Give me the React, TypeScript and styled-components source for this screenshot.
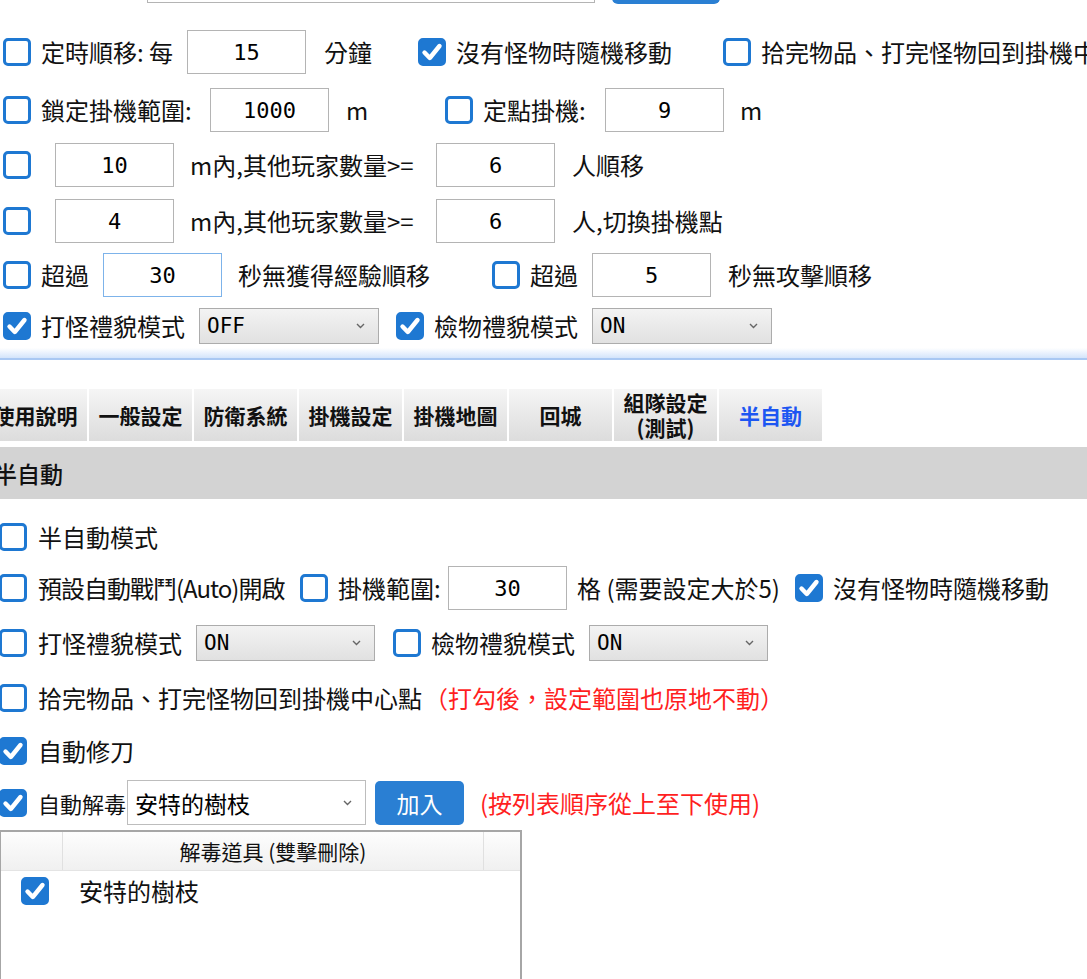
import styled, { createGlobalStyle } from 'styled-components';

const GlobalStyle = createGlobalStyle`
  html, body {
    margin: 0;
    padding: 0;
    background: #fff;
    overflow: hidden;
  }
  body {
    font-family: "Noto Sans CJK TC", "Noto Sans", sans-serif;
    color: #111;
  }
`;

const Page = styled.div`
  width: 1087px;
  height: 979px;
  overflow: hidden;
  display: flex;
  flex-direction: column;
  > * {
    flex-shrink: 0;
  }
`;

const Row = styled.div<{ $mt?: number; $h?: number }>`
  display: flex;
  align-items: center;
  height: ${(p) => p.$h ?? 44}px;
  margin-top: ${(p) => p.$mt ?? 0}px;
  white-space: nowrap;
`;

const StubInput = styled.div`
  margin-left: 147px;
  width: 448px;
  height: 43px;
  box-sizing: border-box;
  border: 1px solid #b4b4b4;
`;

const StubButton = styled.div`
  margin-left: 17px;
  width: 108px;
  height: 44px;
  border-radius: 6px;
  background: #2a7fd3;
`;

const Box = styled.span<{ $on?: boolean; $ml?: number }>`
  flex: none;
  width: 28px;
  height: 28px;
  box-sizing: border-box;
  margin-left: ${(p) => p.$ml ?? 0}px;
  border: 3px solid #1e78d2;
  border-radius: 5px;
  background: ${(p) => (p.$on ? '#1e78d2' : '#fff')};
  display: flex;
  align-items: center;
  justify-content: center;
  svg {
    display: block;
  }
`;

const Text = styled.span<{ $ml?: number; $w?: number; $red?: boolean; $size?: number; $tight?: boolean }>`
  flex: none;
  margin-left: ${(p) => p.$ml ?? 0}px;
  width: ${(p) => (p.$w ? `${p.$w}px` : 'auto')};
  font-size: ${(p) => p.$size ?? 24}px;
  letter-spacing: ${(p) => (p.$tight ? '-1px' : 'normal')};
  line-height: 30px;
  color: ${(p) => (p.$red ? '#ff1f1f' : '#111')};
`;

const NumBox = styled.div<{ $ml?: number; $focus?: boolean }>`
  flex: none;
  margin-left: ${(p) => p.$ml ?? 0}px;
  width: 119px;
  height: 44px;
  box-sizing: border-box;
  border: 1px solid ${(p) => (p.$focus ? '#7db3ea' : '#b4b4b4')};
  background: #fff;
  display: flex;
  align-items: center;
  justify-content: center;
  font-family: "DejaVu Sans Mono", "Liberation Mono", monospace;
  font-size: 22px;
  color: #000;
`;

const SelectBox = styled.div<{ $ml?: number; $w: number; $h?: number; $plain?: boolean }>`
  flex: none;
  margin-left: ${(p) => p.$ml ?? 0}px;
  width: ${(p) => p.$w}px;
  height: ${(p) => p.$h ?? 36}px;
  box-sizing: border-box;
  border: 1px solid ${(p) => (p.$plain ? '#bdbdbd' : '#acacac')};
  background: ${(p) => (p.$plain ? '#fff' : 'linear-gradient(#f3f3f3, #e1e1e1)')};
  display: flex;
  align-items: center;
  justify-content: space-between;
  padding: 0 13px 0 7px;
`;

const SelectValue = styled.span<{ $mono?: boolean }>`
  font-family: ${(p) =>
    p.$mono
      ? '"DejaVu Sans Mono", "Liberation Mono", monospace'
      : '"Noto Sans CJK TC", "Noto Sans", sans-serif'};
  font-size: ${(p) => (p.$mono ? 21 : 23)}px;
  color: #000;
`;

const AddButton = styled.div`
  flex: none;
  margin-left: 9px;
  width: 89px;
  height: 44px;
  border-radius: 5px;
  background: #2a7fd3;
  color: #fff;
  font-size: 23px;
  display: flex;
  align-items: center;
  justify-content: center;
`;

const Divider = styled.div`
  height: 10px;
  background: linear-gradient(#ffffff, #d3e4fb);
  border-bottom: 2px solid #a9c8f3;
`;

const TabBar = styled.div`
  display: flex;
  gap: 2px;
  margin: 29px 0 0 -16px;
  height: 52px;
`;

const Tab = styled.div<{ $active?: boolean }>`
  flex: none;
  width: 103px;
  display: flex;
  align-items: center;
  justify-content: center;
  text-align: center;
  background: linear-gradient(#f5f5f5, #dcdcdc);
  font-size: 21px;
  font-weight: 700;
  line-height: 25px;
  color: ${(p) => (p.$active ? '#1d56f2' : '#111')};
`;

const SectionHead = styled.div`
  margin: 6px 0 0 -6px;
  height: 52px;
  background: #d3d3d3;
  display: flex;
  align-items: center;
  font-size: 23px;
  font-weight: 500;
  color: #111;
`;

const Table = styled.div`
  margin: 5px 0 0 -1px;
  width: 523px;
  height: 170px;
  box-sizing: border-box;
  border: 2px solid #a6a6a6;
  border-bottom: none;
`;

const THead = styled.div`
  display: grid;
  grid-template-columns: 62px 421px 1fr;
  height: 38px;
  background: linear-gradient(#fdfdfd, #f0f0f0);
  border-bottom: 1px solid #e4e4e4;
`;

const TH = styled.div`
  border-right: 1px solid #e0e0e0;
  display: flex;
  align-items: center;
  justify-content: center;
  font-size: 21px;
  &:last-child {
    border-right: none;
  }
`;

const TRow = styled.div`
  display: flex;
  align-items: center;
  height: 40px;
`;

function Check({ on, ml }: { on?: boolean; ml?: number }) {
  return (
    <Box $on={on} $ml={ml}>
      {on && (
        <svg width="22" height="22" viewBox="0 0 22 22">
          <path
            d="M3.5 11.5 L8.8 17 L18.5 5"
            stroke="#fff"
            strokeWidth="4.4"
            fill="none"
            strokeLinecap="round"
            strokeLinejoin="round"
          />
        </svg>
      )}
    </Box>
  );
}

function Select({
  value,
  w,
  ml,
  h,
  plain,
}: {
  value: string;
  w: number;
  ml?: number;
  h?: number;
  plain?: boolean;
}) {
  return (
    <SelectBox $w={w} $ml={ml} $h={h} $plain={plain}>
      <SelectValue $mono={!plain}>{value}</SelectValue>
      <svg width="9" height="6" viewBox="0 0 9 6">
        <path d="M1 1 L4.5 4.5 L8 1" stroke="#666" strokeWidth="1.4" fill="none" />
      </svg>
    </SelectBox>
  );
}

const tabs = ['使用說明', '一般設定', '防衛系統', '掛機設定', '掛機地圖', '回城'];

function App() {
  return (
    <>
      <GlobalStyle />
      <Page>
        <Row $mt={-40} $h={43}>
          <StubInput />
          <StubButton />
        </Row>

        <Row $mt={27}>
          <Check ml={3} />
          <Text $ml={10} $w={131}>定時順移: 每</Text>
          <NumBox $ml={15}>15</NumBox>
          <Text $ml={18} $w={46}>分鐘</Text>
          <Check ml={48} on />
          <Text $ml={10} $w={213}>沒有怪物時隨機移動</Text>
          <Check ml={54} />
          <Text $ml={10}>拾完物品、打完怪物回到掛機中心點</Text>
        </Row>

        <Row $mt={14}>
          <Check ml={3} />
          <Text $ml={10} $w={149}>鎖定掛機範圍:</Text>
          <NumBox $ml={20}>1000</NumBox>
          <Text $ml={17} $w={21}>m</Text>
          <Check ml={78} />
          <Text $ml={10} $w={100}>定點掛機:</Text>
          <NumBox $ml={22}>9</NumBox>
          <Text $ml={16}>m</Text>
        </Row>

        <Row $mt={11}>
          <Check ml={3} />
          <NumBox $ml={24}>10</NumBox>
          <Text $ml={16} $w={230}>m內,其他玩家數量&gt;=</Text>
          <NumBox $ml={16}>6</NumBox>
          <Text $ml={17}>人順移</Text>
        </Row>

        <Row $mt={12}>
          <Check ml={3} />
          <NumBox $ml={24}>4</NumBox>
          <Text $ml={16} $w={230}>m內,其他玩家數量&gt;=</Text>
          <NumBox $ml={16}>6</NumBox>
          <Text $ml={17}>人,切換掛機點</Text>
        </Row>

        <Row $mt={10}>
          <Check ml={3} />
          <Text $ml={10} $w={47}>超過</Text>
          <NumBox $ml={15} $focus>30</NumBox>
          <Text $ml={16} $w={192}>秒無獲得經驗順移</Text>
          <Check ml={62} />
          <Text $ml={10} $w={47}>超過</Text>
          <NumBox $ml={15}>5</NumBox>
          <Text $ml={17}>秒無攻擊順移</Text>
        </Row>

        <Row $mt={7}>
          <Check ml={3} on />
          <Text $ml={10} $w={143}>打怪禮貌模式</Text>
          <Select ml={15} w={180} value="OFF" />
          <Check ml={17} on />
          <Text $ml={10} $w={143}>檢物禮貌模式</Text>
          <Select ml={15} w={180} value="ON" />
        </Row>

        <Divider />

        <TabBar>
          {tabs.map((t) => (
            <Tab key={t}>{t}</Tab>
          ))}
          <Tab>
            組隊設定
            <br />
            (測試)
          </Tab>
          <Tab $active>半自動</Tab>
        </TabBar>

        <SectionHead>半自動</SectionHead>

        <Row $mt={16}>
          <Check ml={-1} />
          <Text $ml={11}>半自動模式</Text>
        </Row>

        <Row $mt={7}>
          <Check ml={-1} />
          <Text $ml={11} $w={245} $tight>預設自動戰鬥(Auto)開啟</Text>
          <Check ml={17} />
          <Text $ml={10} $w={94}>掛機範圍:</Text>
          <NumBox $ml={16}>30</NumBox>
          <Text $ml={10} $w={200}>格 (需要設定大於5)</Text>
          <Check ml={18} on />
          <Text $ml={10}>沒有怪物時隨機移動</Text>
        </Row>

        <Row $mt={11}>
          <Check ml={-1} />
          <Text $ml={11} $w={142}>打怪禮貌模式</Text>
          <Select ml={16} w={179} value="ON" />
          <Check ml={18} />
          <Text $ml={10} $w={143}>檢物禮貌模式</Text>
          <Select ml={15} w={179} value="ON" />
        </Row>

        <Row $mt={11}>
          <Check ml={-1} />
          <Text $ml={11} $w={382}>拾完物品、打完怪物回到掛機中心點</Text>
          <Text $ml={4} $red>（打勾後，設定範圍也原地不動）</Text>
        </Row>

        <Row $mt={9}>
          <Check ml={-1} on />
          <Text $ml={11}>自動修刀</Text>
        </Row>

        <Row $mt={7} $h={45}>
          <Check ml={-1} on />
          <Text $ml={11} $w={89} $size={22}>自動解毒</Text>
          <Select plain w={239} h={45} value="安特的樹枝" />
          <AddButton>加入</AddButton>
          <Text $ml={16} $red>(按列表順序從上至下使用)</Text>
        </Row>

        <Table>
          <THead>
            <TH />
            <TH>解毒道具 (雙擊刪除)</TH>
            <TH />
          </THead>
          <TRow>
            <Check ml={20} on />
            <Text $ml={30}>安特的樹枝</Text>
          </TRow>
        </Table>
      </Page>
    </>
  );
}

export default App;
